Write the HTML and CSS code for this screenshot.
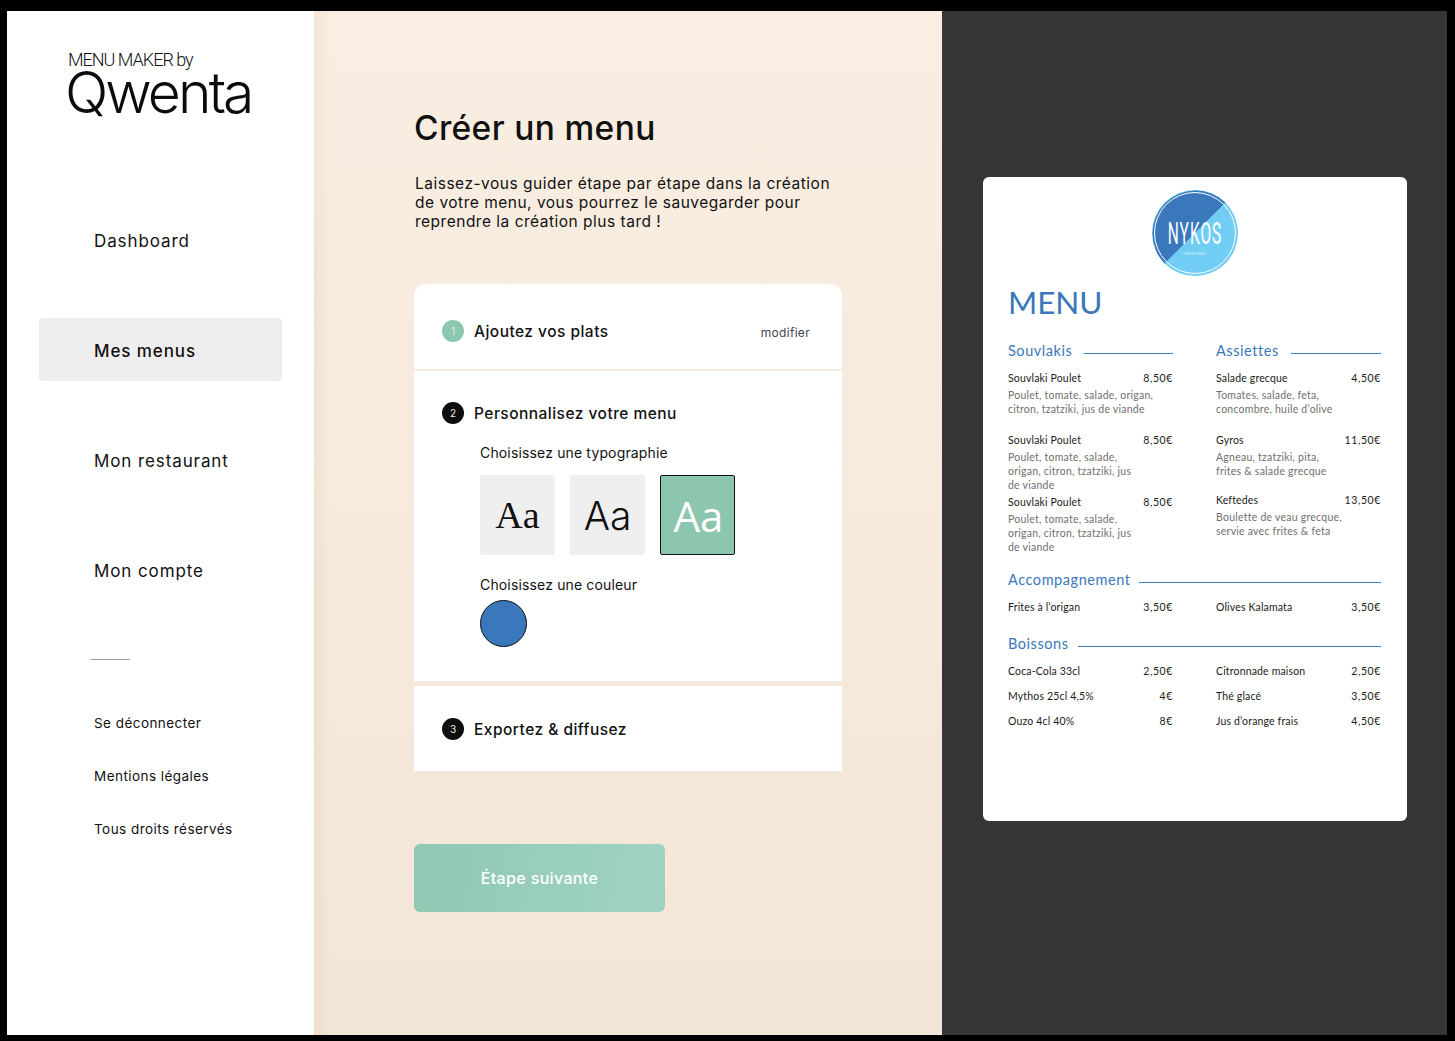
FILE: index.html
```html
<!DOCTYPE html>
<html lang="fr">
<head>
<meta charset="utf-8">
<title>Menu Maker by Qwenta</title>
<link rel="stylesheet" href="styles.css">
</head>
<body>
<div class="app">
  <aside class="sidebar">
    <div class="logo">
      <div class="logo-top">MENU MAKER by</div>
      <div class="logo-word">Qwenta</div>
    </div>
    <nav class="nav">
      <a class="nav-item">Dashboard</a>
      <a class="nav-item active">Mes menus</a>
      <a class="nav-item">Mon restaurant</a>
      <a class="nav-item">Mon compte</a>
    </nav>
    <div class="divider"></div>
    <div class="links">
      <a class="link">Se déconnecter</a>
      <a class="link">Mentions légales</a>
      <a class="link">Tous droits réservés</a>
    </div>
  </aside>

  <main class="main">
    <h1 class="title">Créer un menu</h1>
    <p class="intro">Laissez-vous guider étape par étape dans la création<br>de votre menu, vous pourrez le sauvegarder pour<br>reprendre la création plus tard !</p>

    <section class="card card-first">
      <div class="step-head">
        <span class="num num-done">1</span>
        <span class="step-title">Ajoutez vos plats</span>
        <a class="edit">modifier</a>
      </div>
    </section>

    <section class="card card-mid">
      <div class="step-head">
        <span class="num">2</span>
        <span class="step-title">Personnalisez votre menu</span>
      </div>
      <div class="opts">
        <div class="opt-label">Choisissez une typographie</div>
        <div class="swatches">
          <div class="swatch serif">Aa</div>
          <div class="swatch sans">Aa</div>
          <div class="swatch selected">Aa</div>
        </div>
        <div class="opt-label label-color">Choisissez une couleur</div>
        <div class="color"></div>
      </div>
    </section>

    <section class="card card-last">
      <div class="step-head">
        <span class="num">3</span>
        <span class="step-title">Exportez &amp; diffusez</span>
      </div>
    </section>

    <button class="next">Étape suivante</button>
  </main>

  <section class="preview">
    <article class="sheet">
      <svg class="brand" viewBox="0 0 88 88" width="88" height="88" role="img" aria-label="Nykos">
        <circle cx="44" cy="44" r="43" fill="#72cdf4"/>
        <path d="M74.400 13.600A43 43 0 0 0 13.600 74.400Z" fill="#3a78bb"/>
        <circle cx="44" cy="44" r="40.500" fill="none" stroke="#fff" stroke-width="1"/>
        <text class="brand-name" transform="translate(44 55) scale(.5 1)" text-anchor="middle">NYKOS</text>
        <text class="brand-sub" x="44" y="66" text-anchor="middle">— GREEK FOOD —</text>
      </svg>
      <h2 class="menu-title">MENU</h2>

      <div class="cols cols-top">
        <div class="col">
          <h3 class="sec"><span>Souvlakis</span><i></i></h3>
          <div class="item tall"><div class="row"><span>Souvlaki Poulet</span><span>8,50€</span></div><p class="desc">Poulet, tomate, salade, origan,<br>citron, tzatziki, jus de viande</p></div>
          <div class="item"><div class="row"><span>Souvlaki Poulet</span><span>8,50€</span></div><p class="desc">Poulet, tomate, salade,<br>origan, citron, tzatziki, jus<br>de viande</p></div>
          <div class="item"><div class="row"><span>Souvlaki Poulet</span><span>8,50€</span></div><p class="desc">Poulet, tomate, salade,<br>origan, citron, tzatziki, jus<br>de viande</p></div>
        </div>
        <div class="col">
          <h3 class="sec"><span>Assiettes</span><i></i></h3>
          <div class="item tall"><div class="row"><span>Salade grecque</span><span>4,50€</span></div><p class="desc">Tomates, salade, feta,<br>concombre, huile d’olive</p></div>
          <div class="item mid"><div class="row"><span>Gyros</span><span>11,50€</span></div><p class="desc">Agneau, tzatziki, pita,<br>frites &amp; salade grecque</p></div>
          <div class="item"><div class="row"><span>Keftedes</span><span>13,50€</span></div><p class="desc">Boulette de veau grecque,<br>servie avec frites &amp; feta</p></div>
        </div>
      </div>

      <h3 class="sec sec-wide sec-acc"><span>Accompagnement</span><i></i></h3>
      <div class="cols">
        <div class="row"><span>Frites à l’origan</span><span>3,50€</span></div>
        <div class="row"><span>Olives Kalamata</span><span>3,50€</span></div>
      </div>

      <h3 class="sec sec-wide sec-boi"><span>Boissons</span><i></i></h3>
      <div class="cols drinks">
        <div class="row"><span>Coca-Cola 33cl</span><span>2,50€</span></div>
        <div class="row"><span>Citronnade maison</span><span>2,50€</span></div>
        <div class="row"><span>Mythos 25cl 4,5%</span><span>4€</span></div>
        <div class="row"><span>Thé glacé</span><span>3,50€</span></div>
        <div class="row"><span>Ouzo 4cl 40%</span><span>8€</span></div>
        <div class="row"><span>Jus d’orange frais</span><span>4,50€</span></div>
      </div>
    </article>
  </section>
</div>
</body>
</html>
```
FILE: styles.css
```css
* { box-sizing: border-box; }
html, body { margin: 0; height: 100%; }
body { background: #000; font-family: "Inter", "Open Sans", sans-serif; color: #111; overflow: hidden; }
.app { display: flex; width: 1455px; height: 1041px; padding: 11px 8px 6px 7px; }

/* Sidebar */
.sidebar { width: 307px; flex: none; background: #fff; padding: 39px 32px 0; display: flex; flex-direction: column; }
.logo { padding-left: 29px; }
.logo-top { font: 300 18px/20px "Roboto", sans-serif; letter-spacing: -1px; color: #111; }
.logo-word { font: 300 57px/46px "Inter", sans-serif; letter-spacing: -2.9px; color: #0b0b0b; white-space: nowrap; margin-left: -3px; }
.nav { margin-top: 92px; display: flex; flex-direction: column; gap: 47px; }
.nav-item { display: flex; align-items: center; height: 63px; padding: 2px 0 0 55px; border-radius: 4px; font-size: 17px; letter-spacing: .9px; color: #111; }
.nav-item.active { background: #eee; font-weight: 500; }
.divider { width: 39px; height: 1px; background: #9a9a9a; margin: 58px 0 0 52px; }
.links { margin-top: 49px; display: flex; flex-direction: column; gap: 25px; padding-left: 55px; }
.link { font-size: 13.500px; line-height: 28px; letter-spacing: .45px; color: #111; }

/* Main column */
.main { width: 628px; flex: none; padding: 95px 100px 0; background: linear-gradient(90deg, rgba(190,160,130,.13), rgba(190,160,130,0) 16px), linear-gradient(180deg, #faeee2, #f3e6d8); }
.title { margin: 0; font: 500 33.500px/44px "Inter", sans-serif; letter-spacing: .35px; color: #111; }
.intro { margin: 24px 0 0 1px; font-size: 15.500px; line-height: 19px; letter-spacing: .5px; color: #111; }
.card { width: 428px; background: #fff; padding-left: 28px; }
.card-first { margin-top: 53px; height: 85px; border-radius: 12px 12px 0 0; padding-top: 36px; padding-right: 32px; }
.card-mid { margin-top: 2px; height: 310px; padding-top: 31px; }
.card-last { margin-top: 5px; height: 85px; padding-top: 32px; }
.step-head { display: flex; align-items: center; gap: 10px; height: 22px; }
.num { width: 22px; height: 22px; border-radius: 50%; background: #0e0e0e; color: #f3e6d8; font-size: 10px; display: flex; align-items: center; justify-content: center; flex: none; }
.num-done { background: #8cc7b0; }
.step-title { font-size: 15.500px; font-weight: 500; letter-spacing: .47px; color: #111; }
.edit { margin: 3px 0 0 auto; font-size: 12px; letter-spacing: .3px; color: #3f4450; }
.opts { padding: 19px 0 0 38px; }
.opt-label { font-size: 14px; line-height: 20px; letter-spacing: .15px; color: #111; }
.swatches { margin-top: 12px; display: flex; gap: 15px; }
.swatch { width: 75px; height: 80px; background: #efefef; border-radius: 2px; display: flex; align-items: center; justify-content: center; font-size: 38px; color: #111; }
.serif { font-family: "Liberation Serif", serif; }
.sans { font-family: "Inter", sans-serif; font-weight: 300; font-size: 39px; }
.selected { background: #8cc6ae; border: 1px solid #111; color: #fff; font-family: "Open Sans", sans-serif; font-size: 42px; padding-left: 2px; }
.label-color { margin-top: 20px; }
.color { margin-top: 5px; width: 47px; height: 47px; border-radius: 50%; background: #3a78bb; border: 1px solid #111; }
.next { display: block; margin-top: 73px; width: 251px; height: 68px; border: 0; border-radius: 6px; background: linear-gradient(100deg, #8fc8b2, #a1d3c3); color: #fff; font: 500 16px "Inter", sans-serif; letter-spacing: .35px; }

/* Preview */
.preview { flex: 1; background: #363636; padding: 166px 40px 0 41px; }
.sheet { width: 424px; height: 644px; background: #fff; border-radius: 6px; padding: 12px 26px 0 25px; color: #1b1b1b; font-family: "Lato", "Open Sans", sans-serif; }
.brand { display: block; margin: 0 auto; }
.brand-name { font: 400 31px "Roboto", sans-serif; fill: #fff; letter-spacing: 2px; }
.brand-sub { font: 400 3.200px "Roboto", sans-serif; fill: #dff4fd; letter-spacing: .2px; }
.menu-title { margin: 6px 0 0; font: 400 31.500px/38px "Lato", sans-serif; letter-spacing: -.1px; color: #3a78bb; }
.cols { display: grid; grid-template-columns: 165px 165px; column-gap: 43px; }
.cols-top { margin-top: 20px; }
.col { display: flex; flex-direction: column; }
.sec { display: flex; align-items: center; gap: 12px; margin: 0; height: 20px; font: 400 14.500px/20px "Lato", sans-serif; letter-spacing: .55px; color: #3a78bb; }
.sec i { flex: 1; height: 1px; background: #3a78bb; margin-top: 4px; }
.col .sec { margin-bottom: 10px; }
.sec-wide { width: 373px; gap: 9px; }
.sec-acc { margin-top: 13px; margin-bottom: 10px; }
.sec-boi { margin-top: 20px; margin-bottom: 10px; }
.row { display: flex; justify-content: space-between; font-size: 10.500px; line-height: 14px; letter-spacing: .16px; color: #1b1b1b; }
.row span:last-child { letter-spacing: .6px; }
.item .row { margin-bottom: 3px; }
.desc { margin: 0; font-size: 10.500px; line-height: 14px; letter-spacing: .24px; color: #6f6f6f; }
.item { margin-bottom: 3px; }
.item.tall { margin-bottom: 17px; }
.item.mid { margin-bottom: 15px; }
.drinks { row-gap: 11px; }
```
